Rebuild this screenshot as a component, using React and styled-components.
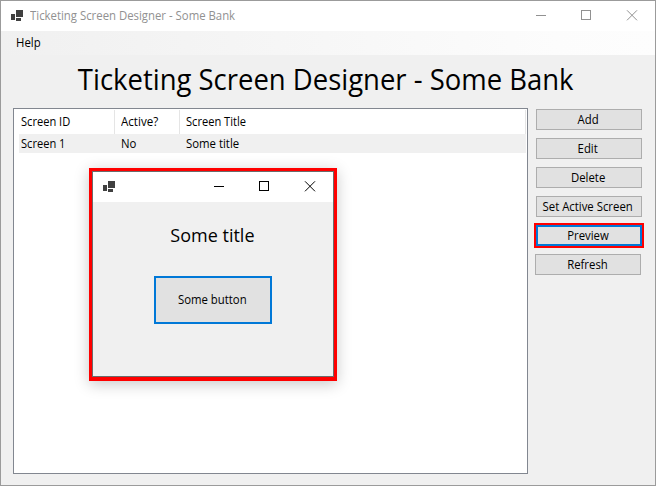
import React from "react";
import styled, { createGlobalStyle } from "styled-components";

const Global = createGlobalStyle`
  * { box-sizing: border-box; }
  html, body { margin: 0; padding: 0; }
  body { font-family: "Open Sans", "Noto Sans", sans-serif; font-size: 12px; color: #000; overflow: hidden; }
`;

const Window = styled.div`
  position: relative;
  width: 656px;
  height: 486px;
  border: 1px solid #9b9b9b;
  background: #f0f0f0;
  display: flex;
  flex-direction: column;
`;

const TitleBar = styled.header`
  height: 30px;
  flex: none;
  background: #fff;
  display: flex;
  align-items: center;
  justify-content: space-between;
  padding-left: 10px;
  color: ${(p) => (p.$active ? "#000" : "#919191")};
`;

const Caption = styled.div`
  display: flex;
  align-items: center;
  gap: 6px;
`;

const Controls = styled.div`
  display: flex;
  svg { display: block; }
`;

const Text = styled.span`
  display: inline-block;
  white-space: pre;
  font-size: ${(p) => p.$size || 12}px;
  line-height: 20px;
  transform: scaleX(${(p) => p.$scale || 0.947});
  transform-origin: ${(p) => (p.$center ? "center" : "left")};
`;

const MenuBar = styled.nav`
  height: 24px;
  flex: none;
  padding: 2px 15px;
  background: linear-gradient(90deg, #f0f0f0, #fcfcfc 85%, #fdfdfd);
`;

const Heading = styled.h1`
  margin: 0;
  height: 53px;
  flex: none;
  display: flex;
  justify-content: center;
  align-items: center;
  font-weight: 400;
  padding: 0 4px 5px 0;
`;

const Content = styled.main`
  display: flex;
  align-items: flex-start;
  padding-left: 12px;
`;

const ListView = styled.section`
  width: 515px;
  height: 366px;
  border: 1px solid #828790;
  background: #fff;
  padding: 1px 1px 0 5px;
`;

const Row = styled.div`
  display: grid;
  grid-template-columns: 96px 65px 346px;
  height: ${(p) => (p.$header ? 24 : 19)}px;
  background: ${(p) => (p.$header ? "#fff" : "#f0f0f0")};
`;

const Cell = styled.div`
  display: flex;
  align-items: center;
  padding-left: ${(p) => (p.$first ? 2 : 6)}px;
  border-right: 1px solid ${(p) => (p.$header ? "#e5e5e5" : "transparent")};
`;

const Actions = styled.aside`
  display: flex;
  flex-direction: column;
  gap: 8px;
  padding: 1px 0 0 8px;
`;

const Button = styled.button`
  width: ${(p) => p.$w || 106}px;
  height: ${(p) => p.$h || 21}px;
  padding: 0 2px 0 0;
  margin-left: ${(p) => p.$shift || 0}px;
  display: flex;
  align-items: center;
  justify-content: center;
  font: inherit;
  color: #000;
  background: #e1e1e1;
  border: ${(p) => (p.$focus ? "2px solid #0078d7" : "1px solid #adadad")};
  box-shadow: ${(p) => (p.$marked ? "0 0 0 2px #f00" : "none")};
`;

const Dialog = styled.div`
  position: absolute;
  left: 88px;
  top: 167px;
  width: 248px;
  height: 213px;
  border: 3px solid #f00;
  border-bottom-width: 4px;
  box-shadow: 0 3px 14px rgba(0, 0, 0, 0.22);
`;

const DialogFrame = styled.div`
  height: 100%;
  border: 1px solid #6b6b6b;
  background: #f0f0f0;
  display: flex;
  flex-direction: column;
`;

const DialogBody = styled.div`
  display: flex;
  flex-direction: column;
  align-items: center;
  padding-top: 23px;
  gap: 31px;
`;

const DialogTitle = styled.div`
  display: flex;
  padding-right: 2px;
`;

const AppIcon = () => (
  <svg width="13" height="12" viewBox="0 0 13 12" shapeRendering="crispEdges" fill="#404040">
    <path d="M0 4h4v6H0zM5 0h7v7H5zM5 8h5v3H5z" />
  </svg>
);

const WindowButtons = ({ gap = 35, end = 18 }) => (
  <Controls>
    <svg width={31 + gap * 2 + end} height="12" fill="none" stroke="currentColor">
      <path d="M0 5.5h10" shapeRendering="crispEdges" />
      <path d={`M${10.5 + gap} 0.5h9v9h-9z`} shapeRendering="crispEdges" />
      <path d={`M${21 + gap * 2} 0.3l10 10m0 -10l-10 10`} />
    </svg>
  </Controls>
);

const ACTIONS = [
  { label: "Add" },
  { label: "Edit" },
  { label: "Delete" },
  { label: "Set Active Screen" },
  { label: "Preview", focus: true, marked: true },
  { label: "Refresh", shift: -1 },
];

export default function App() {
  return (
    <>
      <Global />
      <Window>
        <TitleBar>
          <Caption>
            <AppIcon />
            <Text>Ticketing Screen Designer - Some Bank</Text>
          </Caption>
          <WindowButtons />
        </TitleBar>
        <MenuBar><Text>Help</Text></MenuBar>
        <Heading><Text $size={29} $center>Ticketing Screen Designer - Some Bank</Text></Heading>
        <Content>
          <ListView>
            <Row $header>
              <Cell $header $first><Text $scale={0.925}>Screen ID</Text></Cell>
              <Cell $header><Text $scale={0.965}>Active?</Text></Cell>
              <Cell $header><Text $scale={0.925}>Screen Title</Text></Cell>
            </Row>
            <Row>
              <Cell $first><Text $scale={0.925}>Screen 1</Text></Cell>
              <Cell><Text>No</Text></Cell>
              <Cell><Text>Some title</Text></Cell>
            </Row>
          </ListView>
          <Actions>
            {ACTIONS.map((a) => (
              <Button key={a.label} $focus={a.focus} $marked={a.marked} $shift={a.shift}>
                <Text $center>{a.label}</Text>
              </Button>
            ))}
          </Actions>
        </Content>
        <Dialog>
          <DialogFrame>
            <TitleBar $active>
              <AppIcon />
              <WindowButtons />
            </TitleBar>
            <DialogBody>
              <DialogTitle><Text $size={19} $center>Some title</Text></DialogTitle>
              <Button $w={118} $h={48} $focus><Text $center>Some button</Text></Button>
            </DialogBody>
          </DialogFrame>
        </Dialog>
      </Window>
    </>
  );
}
